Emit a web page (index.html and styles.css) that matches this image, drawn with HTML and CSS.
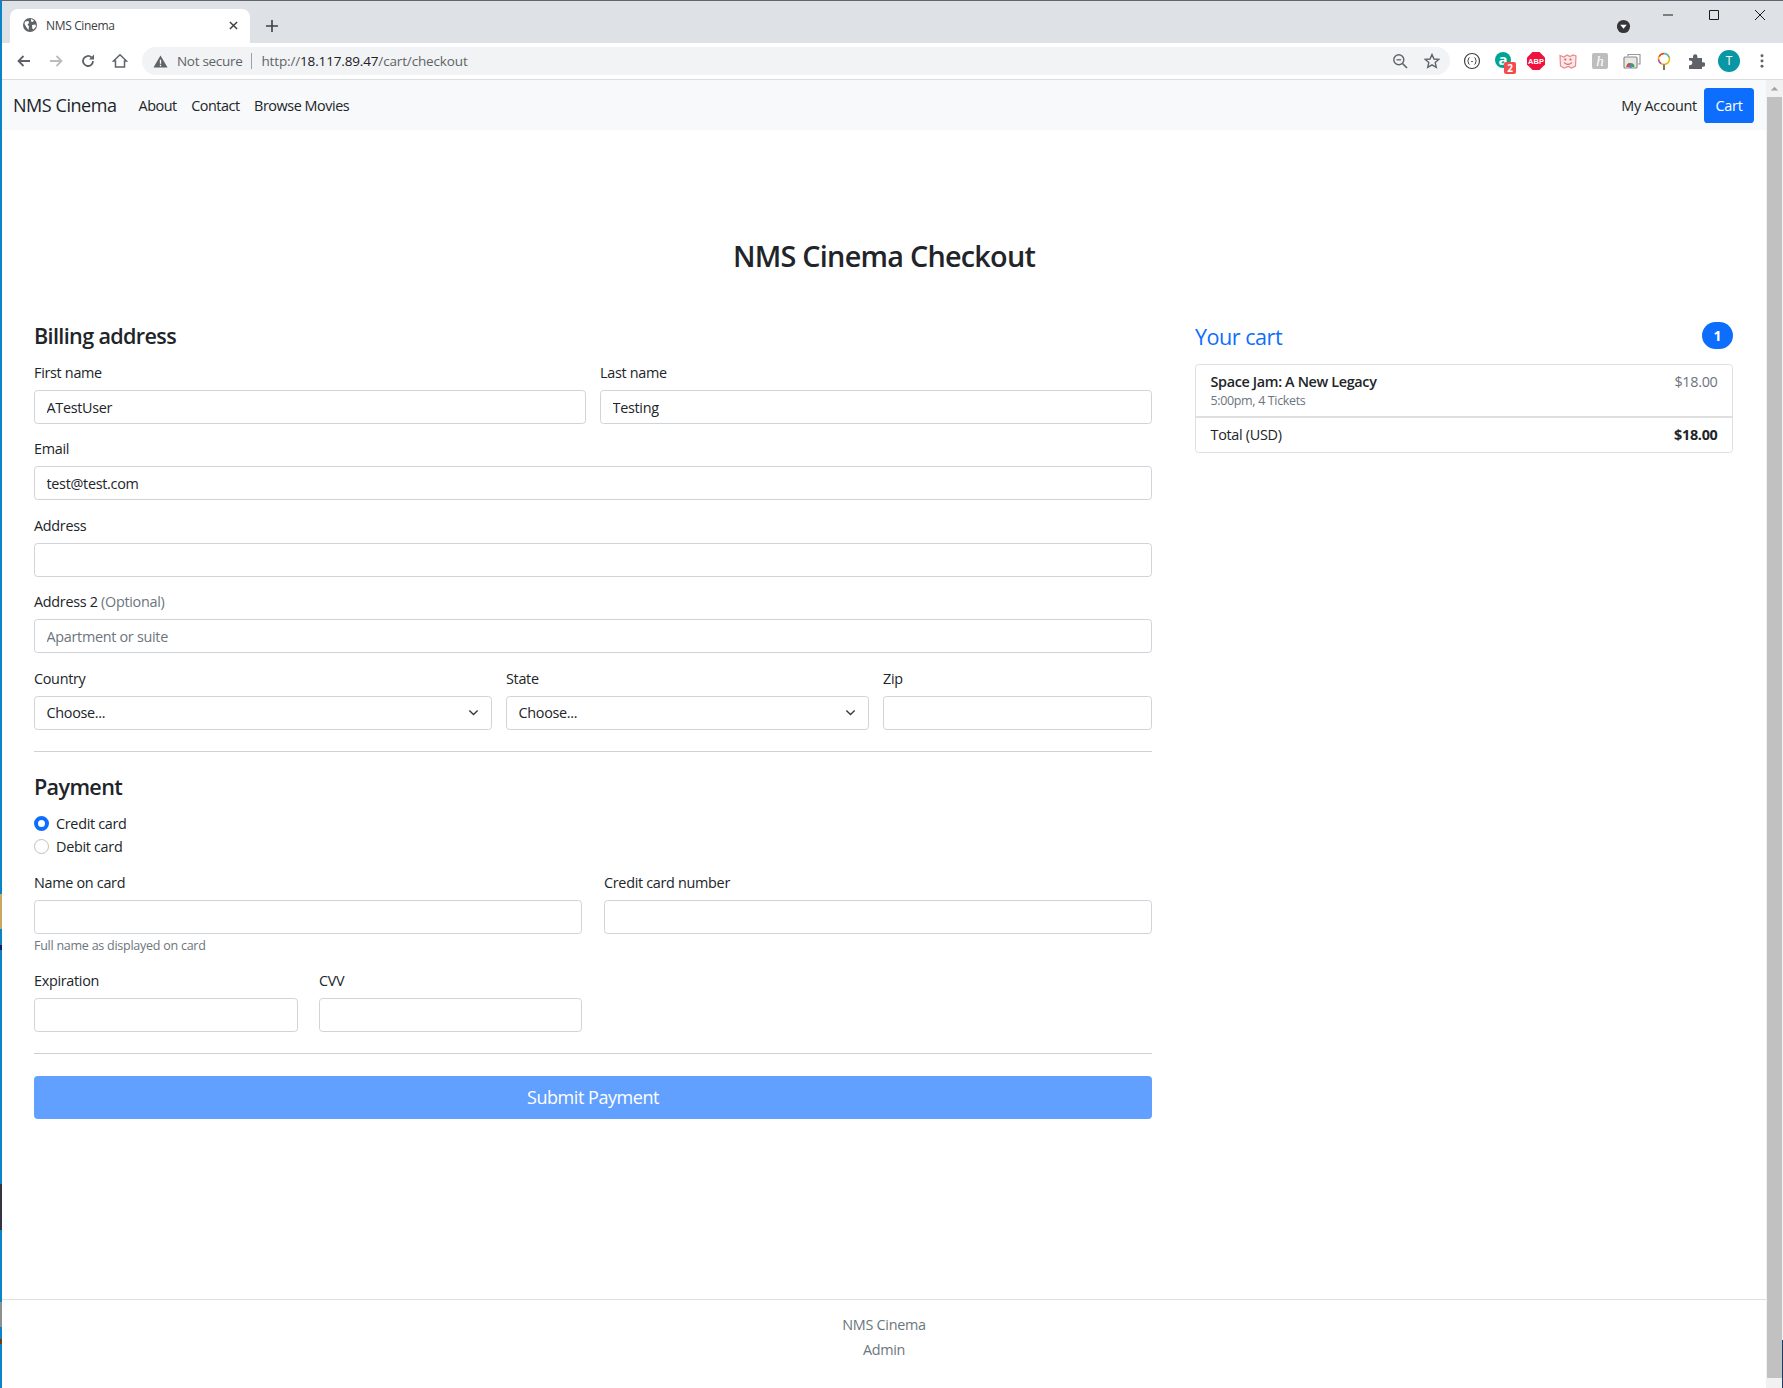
FILE: index.html
```html
<!DOCTYPE html>
<html lang="en">
<head>
<meta charset="utf-8">
<title>NMS Cinema</title>
<link rel="stylesheet" href="styles.css">
</head>
<body>
<div class="window">
  <div class="desktop-edge">
    <span class="edge edge-blue edge-b1"></span>
    <span class="edge edge-tan"></span>
    <span class="edge edge-blue edge-b2"></span>
    <span class="edge edge-navy"></span>
    <span class="edge edge-blue edge-b3"></span>
    <span class="edge edge-dark"></span>
    <span class="edge edge-blue edge-b4"></span>
    <span class="edge edge-grey"></span>
    <span class="edge edge-blue edge-b5"></span>
    <span class="edge edge-brown"></span>
    <span class="edge edge-blue edge-rest"></span>
  </div>
  <div class="app">
    <header class="chrome">
      <div class="tabstrip">
        <div class="tab">
          <svg class="favicon" viewBox="0 0 16 16"><circle cx="8" cy="8" r="7" fill="#5f6368"/><path d="M3 4.500 6.500 4 7 6 5.500 7.500 7 9.500 6.500 13 4.500 10.500 2.500 7ZM9 2l3 1.200L10.800 5 9 4.500ZM10 8l3.600-.6.4 2-2.400 3-1.300-.6Z" fill="#fff"/></svg>
          <span class="tab-title">NMS Cinema</span>
          <svg class="tab-close" viewBox="0 0 10 10"><path d="M1 1l8 8M9 1l-8 8" stroke="#3c4043" stroke-width="1.600"/></svg>
        </div>
        <svg class="newtab" viewBox="0 0 12 12"><path d="M6 0v12M0 6h12" stroke="#3c4043" stroke-width="1.600"/></svg>
        <div class="strip-end">
          <svg class="tabsearch" viewBox="0 0 16 16"><circle cx="8" cy="8" r="7" fill="#35363a"/><path d="M4.500 6.200h7L8 10.500Z" fill="#fff"/></svg>
          <svg class="winctl" viewBox="0 0 12 12"><path d="M1 6h10" stroke="#1a1a1a"/></svg>
          <svg class="winctl" viewBox="0 0 12 12"><path d="M1.500 1.500h9v9h-9z" fill="none" stroke="#1a1a1a"/></svg>
          <svg class="winctl" viewBox="0 0 12 12"><path d="M1 1l10 10M11 1 1 11" stroke="#1a1a1a"/></svg>
        </div>
      </div>
      <div class="toolbar">
        <svg class="tool" viewBox="0 0 16 16"><path d="M14 8H3M7.500 3 2.500 8l5 5" fill="none" stroke="#5f6368" stroke-width="1.800"/></svg>
        <svg class="tool" viewBox="0 0 16 16"><path d="M2 8h11M8.500 3l5 5-5 5" fill="none" stroke="#babcbe" stroke-width="1.800"/></svg>
        <svg class="tool" viewBox="0 0 16 16"><path d="M13 8a5 5 0 1 1-1.500-3.600" fill="none" stroke="#5f6368" stroke-width="1.800"/><path d="M14 1.500v5H9Z" fill="#5f6368"/></svg>
        <svg class="tool" viewBox="0 0 16 16"><path d="M1.500 8 8 1.800 14.500 8h-2v6H3.500V8Z" fill="none" stroke="#5f6368" stroke-width="1.500"/></svg>
        <div class="omnibox">
          <svg class="warn" viewBox="0 0 16 16"><path d="M8 1.500 15.500 14.500H.5Z" fill="#5f6368"/><path d="M8 6v4.500M8 11.500v1.500" stroke="#fff" stroke-width="1.400"/></svg>
          <span class="secure">Not secure</span>
          <span class="omni-sep"></span>
          <span class="url">http://<span class="host">18.117.89.47</span>/cart/checkout</span>
          <svg class="omni-icon push" viewBox="0 0 16 16"><circle cx="6.800" cy="6.800" r="5" fill="none" stroke="#5f6368" stroke-width="1.400"/><path d="M10.500 10.500 15 15" stroke="#5f6368" stroke-width="1.600"/><path d="M4.500 6.800h4.600" stroke="#5f6368" stroke-width="1.300"/></svg>
          <svg class="omni-icon omni-star" viewBox="0 0 16 16"><path d="M8 1.500 10 6l4.800.4-3.600 3.200 1.100 4.800L8 11.900l-4.300 2.500 1.100-4.800L1.200 6.400 6 6Z" fill="none" stroke="#5f6368" stroke-width="1.400"/></svg>
        </div>
        <div class="extensions">
          <svg class="ext" viewBox="0 0 18 18"><circle cx="9" cy="9" r="7.500" fill="none" stroke="#444" stroke-width="1.200"/><path d="M6.500 5.500C5 5.500 6 8.500 4.500 9 6 9.500 5 12.500 6.500 12.500M11.500 5.500C13 5.500 12 8.500 13.500 9 12 9.500 13 12.500 11.500 12.500M8.200 9.500h1.600" fill="none" stroke="#444" stroke-width="1"/></svg>
          <span class="ext ext-a"><span class="ext-a-mark">a</span><span class="ext-badge">2</span></span>
          <svg class="ext" viewBox="0 0 18 18"><path d="M5.500 0h7L18 5.500v7L12.500 18h-7L0 12.500v-7Z" fill="#f0123e"/><text class="abp" x="9" y="12" text-anchor="middle">ABP</text></svg>
          <svg class="ext" viewBox="0 0 18 18"><path d="M1 3.500 5 5l3-2 3 1.500 3-1.500 3 1-.5 10-4 2-3-1.500L5 16l-3.500-2Z" fill="#fbe7e7" stroke="#e98a8a" stroke-width="1.200"/><circle cx="6.300" cy="7.500" r="1.100" fill="#d95c5c"/><circle cx="11.500" cy="7.500" r="1.100" fill="#d95c5c"/><path d="M5 10.500c2 2.500 6 2.500 8 0" fill="none" stroke="#d95c5c" stroke-width="1.200"/></svg>
          <span class="ext ext-h">h</span>
          <svg class="ext" viewBox="0 0 18 18"><path d="M5 4V2.500h12V12h-2" fill="none" stroke="#9a9a9a" stroke-width="1.200"/><rect x="1" y="5" width="13" height="11" rx="1" fill="#e8e8e8" stroke="#8a8a8a" stroke-width="1.200"/><path d="M3.500 15a4 4 0 0 1 8 0Z" fill="#34a853"/><path d="M3.500 15a4 4 0 0 1 4-4V15Z" fill="#ea4335"/><circle cx="7.500" cy="14.500" r="1.500" fill="#4285f4"/></svg>
          <svg class="ext" viewBox="0 0 18 18"><circle cx="9" cy="7" r="5.500" fill="#fff" stroke="#f4b400" stroke-width="1.500"/><path d="M4.200 4.500A5.500 5.500 0 0 1 9 1.500" fill="none" stroke="#ea4335" stroke-width="1.500"/><path d="M9 1.500a5.500 5.500 0 0 1 5 4" fill="none" stroke="#46bdc6" stroke-width="1.500"/><path d="M3.500 7.500a5.500 5.500 0 0 0 2.500 4" fill="none" stroke="#a142f4" stroke-width="1.500"/><path d="M9 12.500V18" stroke="#777" stroke-width="2"/></svg>
          <svg class="ext" viewBox="0 0 18 18"><path d="M2 6h4V4.500a2.200 2.200 0 0 1 4.400 0V6H15v4.300h1.200a2.200 2.200 0 0 1 0 4.400H15V17H2v-3.800h1a2.400 2.400 0 0 0 0-4.800H2Z" fill="#5f6368"/></svg>
          <span class="avatar">T</span>
          <svg class="menu-dots" viewBox="0 0 4 16"><circle cx="2" cy="2" r="1.700" fill="#5f6368"/><circle cx="2" cy="8" r="1.700" fill="#5f6368"/><circle cx="2" cy="14" r="1.700" fill="#5f6368"/></svg>
        </div>
      </div>
    </header>

    <div class="browser-body">
      <div class="viewport">
        <nav class="navbar">
          <a class="brand">NMS Cinema</a>
          <a class="nav-link">About</a>
          <a class="nav-link">Contact</a>
          <a class="nav-link">Browse Movies</a>
          <a class="nav-link account">My Account</a>
          <a class="cart-btn">Cart</a>
        </nav>
        <main class="main">
          <h1 class="page-title">NMS Cinema Checkout</h1>
          <div class="checkout">
            <form class="billing">
              <h2 class="section-title">Billing address</h2>
              <div class="fields">
                <div class="row row-half">
                  <div class="field"><label class="label">First name</label><input class="control" value="ATestUser"></div>
                  <div class="field"><label class="label">Last name</label><input class="control" value="Testing"></div>
                </div>
                <div class="field"><label class="label">Email</label><input class="control" value="test@test.com"></div>
                <div class="field"><label class="label">Address</label><input class="control"></div>
                <div class="field"><label class="label">Address 2 <span class="muted">(Optional)</span></label><input class="control" placeholder="Apartment or suite"></div>
                <div class="row row-geo">
                  <div class="field"><label class="label">Country</label><div class="select">Choose...<svg class="chevron" viewBox="0 0 16 16"><path d="M2 5l6 6 6-6" fill="none" stroke="#343a40" stroke-width="2"/></svg></div></div>
                  <div class="field"><label class="label">State</label><div class="select">Choose...<svg class="chevron" viewBox="0 0 16 16"><path d="M2 5l6 6 6-6" fill="none" stroke="#343a40" stroke-width="2"/></svg></div></div>
                  <div class="field"><label class="label">Zip</label><input class="control"></div>
                </div>
              </div>
              <hr class="rule rule-geo">
              <h2 class="section-title">Payment</h2>
              <div class="radios">
                <div class="radio-row"><span class="radio radio-on"></span>Credit card</div>
                <div class="radio-row"><span class="radio"></span>Debit card</div>
              </div>
              <div class="row row-card">
                <div class="field"><label class="label">Name on card</label><input class="control"><small class="help">Full name as displayed on card</small></div>
                <div class="field"><label class="label">Credit card number</label><input class="control"></div>
              </div>
              <div class="row row-exp">
                <div class="field"><label class="label">Expiration</label><input class="control"></div>
                <div class="field"><label class="label">CVV</label><input class="control"></div>
              </div>
              <hr class="rule rule-pay">
              <button class="submit" type="button">Submit Payment</button>
            </form>
            <aside class="cart">
              <div class="cart-head"><h2 class="cart-title">Your cart</h2><span class="pill">1</span></div>
              <ul class="cart-list">
                <li class="cart-item cart-first">
                  <div><div class="item-name">Space Jam: A New Legacy</div><small class="item-sub">5:00pm, 4 Tickets</small></div>
                  <span class="item-price">$18.00</span>
                </li>
                <li class="cart-item cart-total"><span>Total (USD)</span><strong class="total-amt">$18.00</strong></li>
              </ul>
            </aside>
          </div>
        </main>
        <footer class="footer">
          <a class="foot-link">NMS Cinema</a>
          <a class="foot-link">Admin</a>
        </footer>
      </div>
      <div class="scrollbar">
        <svg class="sb-arrow" viewBox="0 0 16 16"><path d="M4 10l4-4 4 4Z" fill="#a3a3a3"/></svg>
        <div class="sb-thumb"></div>
        <div class="sb-edge"></div>
      </div>
    </div>
  </div>
</div>
</body>
</html>
```
FILE: styles.css
```css
* { box-sizing: border-box; }
html, body { margin: 0; padding: 0; height: 100%; overflow: hidden; }
body { font-family: "Open Sans", "Noto Sans", sans-serif; font-size: 14.4px; color: #212529; background: #fff; }
a { color: inherit; text-decoration: none; }

.window { width: 1783px; height: 1388px; display: flex; }
.app { flex: 1; min-width: 0; display: flex; flex-direction: column; }

/* sliver of the desktop behind the window */
.desktop-edge { width: 2px; flex: none; display: flex; flex-direction: column; border-top: 1px solid #5f6670; }
.edge { display: block; flex: none; }
.edge-blue { background: #0a84c6; }
.edge-b1 { height: 893px; }
.edge-tan { height: 35px; background: #c9a75c; }
.edge-b2 { height: 16px; }
.edge-navy { height: 5px; background: #14205c; }
.edge-b3 { height: 234px; }
.edge-dark { height: 46px; background: #35353f; }
.edge-b4 { height: 72px; }
.edge-grey { height: 25px; background: #8f8f8f; }
.edge-b5 { height: 12px; }
.edge-brown { height: 5px; background: #7a3a10; }
.edge-rest { flex: 1; }

/* browser chrome */
.chrome { height: 80px; flex: none; border-bottom: 1px solid #dadce0; background: #fff; }
.tabstrip { height: 43px; background: #dee1e6; border-top: 1px solid #5f6670; display: flex; align-items: flex-end; padding-left: 8px; }
.tab { width: 240px; height: 34px; background: #fff; border-radius: 8px 8px 0 0; display: flex; align-items: center; padding: 0 12px 2px 12px; }
.favicon { width: 16px; height: 16px; margin-right: 8px; flex: none; }
.tab-title { font-size: 12px; color: #3c4043; letter-spacing: -0.35px; flex: 1; }
.tab-close { width: 9px; height: 9px; }
.newtab { width: 12px; height: 12px; margin: 0 0 11px 16px; }
.strip-end { margin-left: auto; align-self: stretch; display: flex; }
.tabsearch { width: 15px; height: 15px; margin: 18px 14px 0 0; }
.winctl { width: 12px; height: 12px; margin: 8px 17px 0 17px; }
.toolbar { height: 36px; display: flex; align-items: center; padding-left: 14px; }
.tool { width: 16px; height: 16px; margin-right: 16px; flex: none; }
.omnibox { width: 1308px; margin-left: -2px; height: 28px; background: #f1f3f4; border-radius: 14px; display: flex; align-items: center; padding-left: 11px; font-size: 13.5px; flex: none; }
.warn { width: 15px; height: 15px; margin-right: 9px; }
.secure { color: #5f6368; letter-spacing: -0.3px; }
.omni-sep { width: 1px; height: 16px; background: #9aa0a6; margin: 0 9px; }
.url { color: #5f6368; letter-spacing: -0.15px; }
.host { color: #202124; }
.omni-icon { width: 16px; height: 16px; margin-right: 16px; }
.omni-star { margin-right: 10px; }
.push { margin-left: auto; }
.extensions { display: flex; align-items: center; margin-left: 13px; }
.ext { width: 18px; height: 18px; margin-right: 14px; flex: none; position: relative; }
.abp { font-family: "Liberation Sans", sans-serif; font-size: 7.500px; font-weight: 700; fill: #fff; }
.ext-a-mark { display: block; width: 16px; height: 16px; border-radius: 50%; background: #00a591; color: #fff; font-size: 15px; font-weight: 700; line-height: 14px; text-align: center; }
.ext-badge { position: absolute; left: 9px; top: 10px; width: 12px; height: 12px; background: #f44b4b; border-radius: 2px; color: #fff; font-size: 10px; font-weight: 700; line-height: 12px; text-align: center; }
.ext-h { width: 16px; height: 16px; border-radius: 2px; background: #bdbdbd; color: #fff; font-family: "Liberation Serif", serif; font-style: italic; font-size: 15px; line-height: 16px; text-align: center; margin-left: 1px; margin-right: 15px; }
.avatar { width: 22px; height: 22px; border-radius: 50%; background: #0a97a5; color: #fff; font-size: 12px; line-height: 22px; text-align: center; margin-left: -1px; margin-right: 20px; flex: none; }
.menu-dots { width: 4px; height: 14px; }

/* page frame */
.browser-body { flex: 1; display: flex; min-height: 0; }
.viewport { flex: 1; min-width: 0; display: flex; flex-direction: column; }
.scrollbar { width: 17px; flex: none; background: #f1f1f1; display: flex; flex-direction: column; padding: 0 1px 10px; position: relative; }
.sb-arrow { width: 15px; height: 17px; flex: none; }
.sb-thumb { flex: 1; background: #c1c1c1; }
.sb-edge { position: absolute; right: 0; bottom: 0; width: 1px; height: 48px; background: #1f3b63; }

/* navbar */
.navbar { height: 50px; flex: none; background: #f8f9fa; display: flex; align-items: center; padding: 0 12px 0 11px; }
.brand { font-size: 18px; margin-right: 22px; letter-spacing: -0.45px; }
.nav-link { margin-right: 14.400px; letter-spacing: -0.45px; }
.account { margin-left: auto; margin-right: 7px; letter-spacing: -0.25px; }
.cart-btn { width: 50px; height: 35px; background: #0d6efd; color: #fff; border-radius: 3.600px; display: flex; align-items: center; justify-content: center; letter-spacing: -0.25px; }

/* main */
.main { flex: 1; display: flex; flex-direction: column; padding: 0 32px; }
.page-title { font-size: 28.800px; font-weight: 600; line-height: 34px; text-align: center; margin: 109px 0 0; letter-spacing: -0.75px; }
.checkout { display: grid; grid-template-columns: 1118px 538px; column-gap: 43px; margin-top: 50px; }
.section-title { font-size: 21.600px; font-weight: 600; line-height: 26px; margin: 0; letter-spacing: -0.65px; }
.billing { display: flex; flex-direction: column; }
.fields { display: flex; flex-direction: column; row-gap: 14.300px; margin-top: 13px; }
.row { display: grid; }
.row-half { grid-template-columns: 1fr 1fr; column-gap: 14px; }
.row-geo { grid-template-columns: 458px 363px 269px; column-gap: 14px; }
.row-card { grid-template-columns: 548px 548px; column-gap: 22px; margin-top: 15px; }
.row-exp { grid-template-columns: 264px 263px; column-gap: 21px; margin-top: 14.500px; }
.field { display: flex; flex-direction: column; min-width: 0; }
.label { height: 21.600px; line-height: 21.600px; margin-bottom: 6.500px; letter-spacing: -0.3px; }
.muted { color: #6c757d; }
.control { width: 100%; height: 34px; border: 1px solid #ced4da; border-radius: 3.600px; padding: 0 11.500px; font: inherit; color: #212529; letter-spacing: -0.3px; background: #fff; }
.control::placeholder { color: #6c757d; opacity: 1; }
.select { height: 34px; border: 1px solid #ced4da; border-radius: 3.600px; padding: 0 11.500px; display: flex; align-items: center; justify-content: space-between; letter-spacing: -0.3px; }
.chevron { width: 11px; height: 11px; margin-right: 1px; }
.rule { width: 100%; height: 1px; border: 0; background: #cfd0d1; margin: 0; }
.rule-geo { margin-top: 21px; margin-bottom: 22px; }
.radios { display: flex; flex-direction: column; row-gap: 1.500px; margin-top: 13px; }
.radio-row { display: flex; align-items: center; height: 21.600px; letter-spacing: -0.3px; }
.radio { width: 15px; height: 15px; border-radius: 50%; border: 1px solid #bfbfbf; margin-right: 7px; flex: none; }
.radio-on { border: 4px solid #0d6efd; }
.help { font-size: 12.500px; color: #6c757d; line-height: 18px; margin-top: 3px; letter-spacing: -0.25px; }
.rule-pay { margin-top: 20.500px; margin-bottom: 22px; }
.submit { width: 100%; height: 43px; background: #61a0fe; border: 0; border-radius: 4px; color: #fff; font: inherit; font-size: 18px; letter-spacing: -0.45px; }

/* cart */
.cart-head { display: flex; align-items: center; justify-content: space-between; height: 28px; margin-bottom: 13px; }
.cart-title { font-size: 21.600px; font-weight: 400; line-height: 26px; margin: 0; color: #0d6efd; letter-spacing: -0.5px; }
.pill { width: 31px; height: 27px; border-radius: 14px; background: #0d6efd; color: #fff; font-size: 14px; font-weight: 700; display: flex; align-items: center; justify-content: center; align-self: flex-start; margin-top: -1px; }
.cart-list { list-style: none; margin: 0; padding: 0; border: 1px solid #dfdfdf; border-radius: 3.600px; }
.cart-item { display: flex; justify-content: space-between; padding: 7px 14.500px; letter-spacing: -0.3px; }
.cart-first { padding-top: 6px; }
.item-name { line-height: 21px; font-weight: 600; letter-spacing: -0.35px; }
.item-sub { display: block; font-size: 12.500px; line-height: 16px; margin-top: 1px; color: #6c757d; letter-spacing: -0.35px; }
.item-price { color: #6c757d; line-height: 21px; }
.cart-total { border-top: 2px solid #dfdfdf; padding-top: 7px; padding-bottom: 8px; }
.total-amt { font-weight: 700; }

/* footer */
.footer { height: 89px; flex: none; border-top: 1px solid #dfdfdf; display: flex; flex-direction: column; align-items: center; padding-top: 14px; row-gap: 3px; color: #6c757d; letter-spacing: -0.3px; }
.foot-link { line-height: 21.600px; }
```
